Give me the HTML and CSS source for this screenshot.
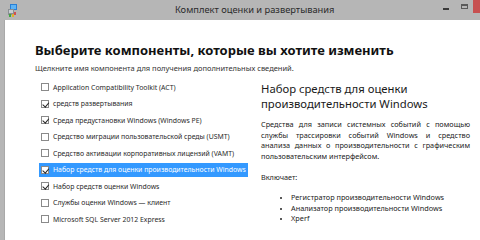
FILE: index.html
```html
<!DOCTYPE html>
<html lang="ru">
<head>
<meta charset="utf-8">
<link rel="stylesheet" href="styles.css">
</head>
<body>
<div class="window">
  <div class="titlebar">
    <svg class="appicon" width="11" height="13" viewBox="0 0 11 13">
      <rect x="3" y="0" width="7" height="6" fill="#2a7fd4"/>
      <rect x="4" y="1" width="5" height="4" fill="#5fb4f5"/>
      <rect x="1" y="5" width="6" height="6" fill="#8a8f94"/>
      <rect x="2" y="6" width="4" height="3" fill="#c9ced2"/>
      <rect x="2" y="10" width="2" height="3" fill="#3fa63f"/>
      <rect x="5" y="10" width="2" height="3" fill="#e0b030"/>
      <rect x="7" y="8" width="2" height="3" fill="#d05050"/>
    </svg>
    <div class="title">Комплект оценки и развертывания</div>
    <div class="controls">
      <span class="btn-min"></span>
      <span class="btn-max"></span>
      <span class="btn-close"></span>
    </div>
  </div>
  <div class="frame">
    <div class="edge"></div>
    <div class="content">
      <h1 class="heading">Выберите компоненты, которые вы хотите изменить</h1>
      <p class="sub">Щелкните имя компонента для получения дополнительных сведений.</p>
      <div class="columns">
        <ul class="list">
          <li class="row"><span class="box"></span><span class="label">Application Compatibility Toolkit (ACT)</span></li>
          <li class="row"><span class="box checked"></span><span class="label">средств развертывания</span></li>
          <li class="row"><span class="box checked"></span><span class="label">Среда предустановки Windows (Windows PE)</span></li>
          <li class="row"><span class="box"></span><span class="label">Средство миграции пользовательской среды (USMT)</span></li>
          <li class="row"><span class="box"></span><span class="label">Средство активации корпоративных лицензий (VAMT)</span></li>
          <li class="row selected"><span class="box checked"></span><span class="label">Набор средств для оценки производительности Windows</span></li>
          <li class="row"><span class="box checked"></span><span class="label">Набор средств оценки Windows</span></li>
          <li class="row"><span class="box"></span><span class="label">Службы оценки Windows — клиент</span></li>
          <li class="row"><span class="box"></span><span class="label">Microsoft SQL Server 2012 Express</span></li>
        </ul>
        <div class="details">
          <h2 class="d-title">Набор средств для оценки<br>производительности Windows</h2>
          <p class="d-text"><span class="jl">Средства для записи системных событий с помощью</span><span class="jl">службы трассировки событий Windows и средство</span><span class="jl">анализа данных о производительности с графическим</span><span class="ll">пользовательским интерфейсом.</span></p>
          <p class="d-inc">Включает:</p>
          <ul class="bullets">
            <li>Регистратор производительности Windows</li>
            <li>Анализатор производительности Windows</li>
            <li>Xperf</li>
          </ul>
        </div>
      </div>
    </div>
  </div>
</div>
</body>
</html>
```
FILE: styles.css
```css
* { box-sizing: border-box; }
html, body { margin: 0; padding: 0; }
body {
  width: 480px;
  height: 240px;
  overflow: hidden;
  background: #ffffff;
  font-family: "Noto Sans", "Open Sans", sans-serif;
  color: #1e1e1e;
}
.window { width: 480px; height: 240px; display: flex; flex-direction: column; }
.titlebar {
  height: 20px;
  flex: none;
  background: #b6b6b6;
  display: flex;
  align-items: flex-start;
}
.appicon { margin: 4px 0 0 7px; flex: none; }
.title {
  margin-left: 157px;
  margin-top: 3px;
  font-size: 9.3px;
  line-height: 14px;
  color: #2a2a2a;
  white-space: nowrap;
}
.controls { margin-left: auto; display: flex; align-items: flex-start; }
.btn-min { width: 6px; height: 2px; background: #3a3a3a; margin-top: 8px; }
.btn-max { width: 7px; height: 5px; border: 1px solid #5a5a5a; border-top-width: 2px; margin: 4px 0 0 12px; }
.btn-close { width: 7px; height: 13px; background: #c75050; margin-left: 5px; }

.frame { flex: 1; display: flex; }
.edge { width: 5px; background: #b6b6b6; border-right: 1px solid #a9a9a9; flex: none; }
.content { flex: 1; padding: 21px 0 0 30px; }
.heading {
  margin: 0;
  font-size: 13px;
  line-height: 18px;
  font-weight: 700;
  color: #111;
}
.sub {
  margin: 3px 0 0;
  font-size: 7.5px;
  line-height: 12px;
  color: #333;
}
.columns { display: flex; margin-top: 5px; }
.list { list-style: none; margin: 0; padding: 0; width: 209px; margin-left: 4px; flex: none; }
.row {
  height: 16.5px;
  display: flex;
  align-items: center;
  padding-left: 2px;
  font-size: 6.9px;
  color: #2a2a2a;
  white-space: nowrap;
}
.row.selected { background: #3399ff; color: #fff; height: 14.5px; margin: 1px 0; }
.box {
  width: 8px; height: 8px;
  border: 1px solid #8a8a8a;
  background: #fff;
  margin-right: 4px;
  flex: none;
  position: relative;
}
.box.checked::after {
  content: "";
  position: absolute;
  left: 1.5px; top: 0px;
  width: 2.5px; height: 4.5px;
  border-right: 1.3px solid #222;
  border-bottom: 1.3px solid #222;
  transform: rotate(40deg);
}
.details { margin-left: 13px; width: 209px; }
.d-title {
  margin: 2px 0 0;
  font-size: 11.3px;
  line-height: 15px;
  font-weight: 400;
  color: #1a1a1a;
}
.d-text {
  margin: 8px 0 0;
  font-size: 7.3px;
  line-height: 10.7px;
  color: #222;
}
.jl { display: block; text-align: justify; text-align-last: justify; white-space: nowrap; }
.ll { display: block; }
.d-inc { margin: 10px 0 0; font-size: 7.3px; line-height: 10.5px; color: #222; }
.bullets {
  margin: 10px 0 0;
  padding-left: 30px;
  font-size: 7.3px;
  line-height: 10.5px;
  color: #222;
}
.bullets li::marker { font-size: 7px; }
```
